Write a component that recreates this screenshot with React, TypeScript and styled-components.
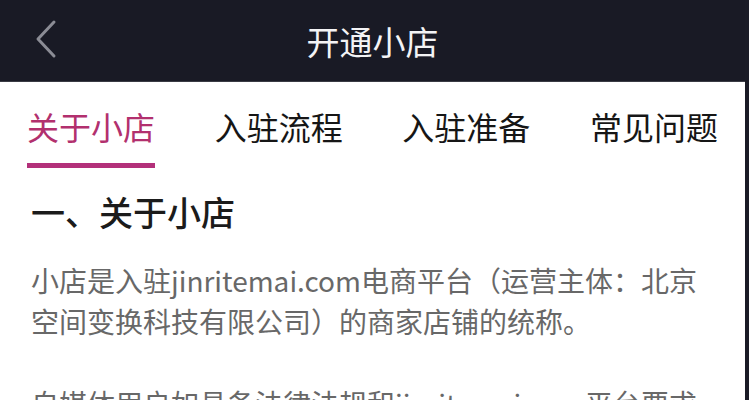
import React from 'react';
import styled, { createGlobalStyle } from 'styled-components';

const GlobalStyle = createGlobalStyle`
  body {
    margin: 0;
    background: #fff;
    font-family: "Noto Sans CJK SC", "Noto Sans", sans-serif;
  }
`;

const tabs = ['关于小店', '入驻流程', '入驻准备', '常见问题'];

const App = () => {
  return (
    <Page>
      <GlobalStyle />
      <Header>
        <BackButton>
          <svg width="24" height="40" viewBox="0 0 24 40">
            <polyline
              points="20,3 4,20 20,37"
              fill="none"
              stroke="#8b8c95"
              strokeWidth="3"
              strokeLinecap="round"
              strokeLinejoin="round"
            />
          </svg>
        </BackButton>
        <Title>开通小店</Title>
      </Header>
      <TabBar>
        {tabs.map((t, i) => (
          <Tab key={t}>
            <TabLabel $active={i === 0}>{t}</TabLabel>
            <TabLine $active={i === 0} />
          </Tab>
        ))}
      </TabBar>
      <Content>
        <Heading>一、关于小店</Heading>
        <Paragraph>
          小店是入驻jinritemai.com电商平台（运营主体：北京
          <br />
          空间变换科技有限公司）的商家店铺的统称。
        </Paragraph>
        <Paragraph>自媒体用户如具备法律法规和jinritemai.com平台要求</Paragraph>
      </Content>
    </Page>
  );
};

export default App;

const Page = styled.div`
  width: 745px;
  height: 400px;
  overflow: hidden;
  border-right: 4px solid #1a1b26;
  background: #fff;
`;

const Header = styled.div`
  position: relative;
  display: flex;
  align-items: center;
  justify-content: center;
  height: 81px;
  background: #191a25;
  border-bottom: 1px solid #3a3b44;
`;

const BackButton = styled.div`
  position: absolute;
  left: 34px;
  top: 19px;
  display: flex;
`;

const Title = styled.div`
  font-size: 33px;
  line-height: 40px;
  color: #f3f3f5;
`;

const TabBar = styled.div`
  display: flex;
  justify-content: space-between;
  padding: 27px 27px 0 27px;
`;

const Tab = styled.div`
  display: flex;
  flex-direction: column;
`;

const TabLabel = styled.div<{ $active?: boolean }>`
  font-size: 32px;
  line-height: 34px;
  color: ${(p) => (p.$active ? '#b2306e' : '#161616')};
`;

const TabLine = styled.div<{ $active?: boolean }>`
  height: 5px;
  margin-top: 20px;
  background: ${(p) => (p.$active ? '#b3307a' : 'transparent')};
`;

const Content = styled.div`
  padding: 24px 31px 0;
`;

const Heading = styled.div`
  font-size: 34px;
  line-height: 40px;
  font-weight: 500;
  color: #1b1b1b;
  margin-bottom: 28px;
`;

const Paragraph = styled.p`
  margin: 0 0 41px;
  font-size: 28px;
  line-height: 41px;
  color: #686868;
  white-space: nowrap;
`;
